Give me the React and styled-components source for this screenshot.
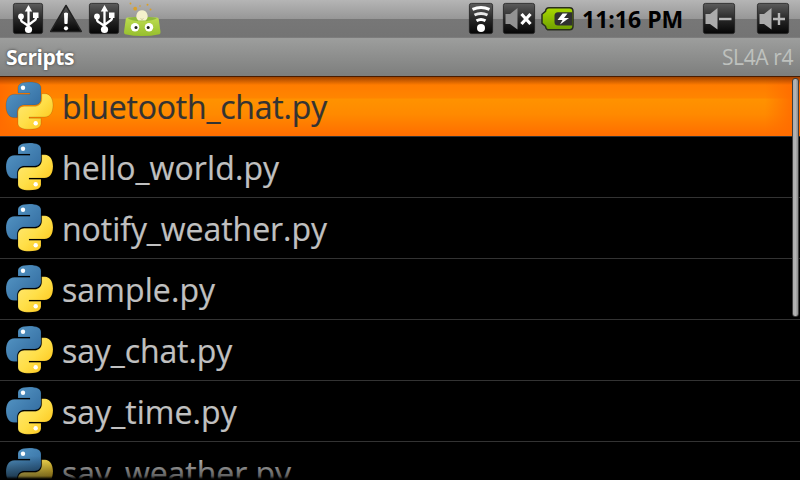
import React from "react";
import styled, { createGlobalStyle } from "styled-components";

const GlobalStyle = createGlobalStyle`
  html, body { margin: 0; background: #000; overflow: hidden; }
  * { box-sizing: border-box; }
`;

const Screen = styled.main`
  position: relative;
  display: flex;
  flex-direction: column;
  width: 800px;
  height: 480px;
  overflow: hidden;
  background: #000;
  font-family: "Open Sans", "Noto Sans", sans-serif;
`;

const StatusBar = styled.header`
  display: flex;
  flex: none;
  justify-content: space-between;
  height: 38px;
  padding: 0 10px 0 12px;
  background: linear-gradient(#b5b5b5 0, #979797 19px, #777 19px, #747474 37px, #858585 38px);
`;

const IconGroup = styled.div`
  display: flex;
  align-items: flex-start;
`;

const Glyph = styled.svg`
  display: block;
  flex: none;
  margin-left: ${(p) => p.$gap || 0}px;
`;

const Clock = styled.time`
  width: 101px;
  margin-left: 8px;
  color: #000;
  font-size: 23px;
  font-weight: 700;
  line-height: 39px;
  white-space: nowrap;
`;

const TitleBar = styled.div`
  display: flex;
  flex: none;
  justify-content: space-between;
  height: 38px;
  padding: 0 7px 0 6px;
  background: linear-gradient(#9d9e9d, #7d7e7d);
  line-height: 38px;
  white-space: nowrap;
`;

const Title = styled.h1`
  margin: 0;
  color: #fff;
  font-size: 21px;
  font-weight: 700;
  line-height: inherit;
  letter-spacing: -0.45px;
  text-shadow: 0 0 3px #333;
`;

const Version = styled.span`
  color: #bec1be;
  font-size: 21px;
  line-height: 39px;
  letter-spacing: -0.4px;
`;

const List = styled.ul`
  flex: 1;
  min-height: 0;
  margin: 0;
  padding: 0;
  overflow: hidden;
  list-style: none;
`;

const Row = styled.li`
  display: flex;
  height: 61px;
  padding: 6px 0 0 6px;
  border-bottom: 1px solid #333;
  color: ${(p) => (p.$selected ? "#333" : "#c0c0c0")};
  background: ${(p) =>
    p.$selected
      ? "linear-gradient(#491c00 0, #491c00 1px, transparent 1px), linear-gradient(rgba(90,30,0,.65), transparent 9px), linear-gradient(90deg, #ff6c00 0, rgba(255,108,0,0) 30px, rgba(255,108,0,0) 765px, #ff6c00 795px), linear-gradient(#ff7600 0, #ff8500 22px, #ff9200 23px, #ff8a00 38px, #ff6d00 60px)"
      : "#000"};
`;

const FileName = styled.span`
  margin-left: 9px;
  font-size: 32px;
  line-height: 49px;
  letter-spacing: ${(p) => p.$tracking}px;
  -webkit-text-stroke: 0.2px currentColor;
  white-space: nowrap;
`;

const ScrollThumb = styled.div`
  position: absolute;
  top: 78px;
  right: 1px;
  width: 7px;
  height: 239px;
  border: 1px solid #3e3e3e;
  border-radius: 3px;
  background: linear-gradient(90deg, #aaa, #b4b4b4 50%, #8b8b8b);
`;

const BottomFade = styled.div`
  position: absolute;
  right: 0;
  bottom: 0;
  left: 0;
  height: 24px;
  background: linear-gradient(transparent, rgba(0, 0, 0, 0.5) 20px, #000 23px);
`;

function Defs() {
  return (
    <defs>
      <linearGradient id="tile" x2="0" y2="1">
        <stop stopColor="#5c5c5c" />
        <stop offset=".5" stopColor="#292929" />
        <stop offset="1" stopColor="#050505" />
      </linearGradient>
      <linearGradient id="blue" x2="1" y2="1">
        <stop stopColor="#599bc9" />
        <stop offset="1" stopColor="#2d659a" />
      </linearGradient>
      <linearGradient id="yellow" x2="1" y2="1">
        <stop stopColor="#ffe97a" />
        <stop offset=".5" stopColor="#ffdf48" />
        <stop offset="1" stopColor="#fcbf10" />
      </linearGradient>
      <linearGradient id="lime" x2="0" y2="1">
        <stop stopColor="#a8d800" />
        <stop offset="1" stopColor="#6fa000" />
      </linearGradient>
      <linearGradient id="bowl" x2="0" y2="1">
        <stop stopColor="#bddc51" />
        <stop offset="1" stopColor="#96bf2d" />
      </linearGradient>
    </defs>
  );
}

const Tile = ({ w }) => (
  <rect x="1.4" y="3.4" width={w - 2.8} height="30.2" rx="2" fill="url(#tile)" stroke="#202020" strokeWidth=".8" />
);

const Usb = ({ gap }) => (
  <Glyph $gap={gap} width="32" height="38">
    <Defs />
    <Tile w={32} />
    <g fill="none" stroke="#fff" strokeWidth="2.3">
      <path d="M16.5 9v20M9 17v2.5q0 2 2.8 3.2l4.7 3.3M24 15v3q0 2-3 3.5L16.5 25" />
    </g>
    <path d="M12.8 11.5 16.5 5l3.7 6.5zM21 12.5h5.5V18H21z" fill="#fff" />
    <circle cx="9" cy="16.5" r="2.9" fill="#fff" />
    <circle cx="16.5" cy="29.5" r="3.6" fill="#fff" />
  </Glyph>
);

const Warning = () => (
  <Glyph $gap={5} width="34" height="38">
    <path d="M17 5.5 32.3 31.4H1.7z" fill="url(#tile)" stroke="#222" strokeWidth="1.5" strokeLinejoin="round" />
    <path d="M15 13.2q2-1.6 4 0l-.4 10.3q-1.6 1.2-3.2 0z" fill="#fff" />
    <circle cx="17" cy="28.3" r="2.1" fill="#fff" />
  </Glyph>
);

const Robot = () => (
  <Glyph $gap={3} width="40" height="38">
    <path d="M4.5 17.500h29.500q1.500 0 1.800 2L37.500 32q.2 1.600-1 2.200-17.300 3.800-34.500 0-1.200-.6-1-2.200L2.700 19.500q.3-2 1.800-2z" fill="url(#bowl)" />
    <path d="M4.500 18Q19 15 34 18 31 21 19 21.200 7 21 4.500 18z" fill="#8fb83c" />
    <path d="M19 10.300a5.800 5.800 0 0 1 3.500 10.300h-7A5.800 5.800 0 0 1 19 10.300z" fill="#f5f1cc" />
    <path d="m17.500 18 1.500 2 1.500-2" fill="none" stroke="#cfc99d" strokeWidth=".8" />
    <circle cx="12" cy="27.200" r="4.200" fill="#fff" />
    <circle cx="26" cy="27.200" r="4.200" fill="#fff" />
    <circle cx="13" cy="27.500" r="1.500" fill="#20261a" />
    <circle cx="25.200" cy="27.500" r="1.500" fill="#20261a" />
    <g fill="#dba027">
      <circle cx="12.200" cy="8.700" r="1.900" />
      <circle cx="24.500" cy="4.800" r="1" />
      <circle cx="27.500" cy="9.500" r="1" />
      <circle cx="7.500" cy="3.500" r=".9" />
      <circle cx="17" cy="6" r=".8" />
    </g>
  </Glyph>
);

const Wifi = () => (
  <Glyph width="26" height="38">
    <Tile w={26} />
    <g fill="none" stroke="#fff" strokeWidth="3">
      <path d="M4.500 9.300q8.500-3.600 17 0" />
      <path d="M6.500 15q6.500-3.200 13 0" stroke="#e9e9e9" />
      <path d="M8.500 20.800q4.500-2.700 9 0" />
    </g>
    <circle cx="13" cy="28" r="4" fill="#fff" />
  </Glyph>
);

const Speaker = ({ kind, gap }) => (
  <Glyph $gap={gap} width="34" height="38">
    <Tile w={34} />
    <path d="M3.500 14H8l7.500-6v21.500L8 24H3.500z" fill={kind === "mute" ? "#929292" : "#ababab"} />
    {kind === "mute" && <path d="m19.500 14 9 10m0-10-9 10" stroke="#fff" strokeWidth="3.200" />}
    {kind === "down" && <path d="M17 19h12.500" stroke="#b8b8b8" strokeWidth="2.400" />}
    {kind === "up" && <path d="M17 19h12M23 13v12" stroke="#b8b8b8" strokeWidth="2.400" />}
  </Glyph>
);

const Battery = () => (
  <Glyph $gap={4} width="34" height="38">
    <path d="M9 7.800h20.500q3.500 0 3.500 3.500v15q0 3.500-3.500 3.500H9q-3 0-3.500-3.500l-3.500-3v-9l3.500-3q.5-3.500 3.500-3.500z" fill="url(#lime)" stroke="#292e1d" strokeWidth="1.500" />
    <path d="M18 12.200H32v13.300H18q-3.500 0-3.500-3.500v-6.300q0-3.500 3.500-3.500z" fill="#303030" />
    <path d="m22.500 13.500-5 6.500h5L20 24.500l9-6.500h-5l3.500-4.500z" fill="#fff" />
  </Glyph>
);

const BODY =
  "M23.500 0C14 0 12 3 12 6v5h12v1.300H8.500C2.500 12.300 0 17.500 0 24c0 6.500 3 11.600 8 11.600h3.300V30c0-4.500 3.500-7 7-7h10.500c3.500 0 6.200-2.800 6.200-6V6C35 2 31 0 23.500 0z";

const Python = () => (
  <Glyph width="47" height="48" viewBox="0 0 47 48" overflow="visible">
    <g stroke="#000" strokeOpacity=".25" strokeWidth=".5">
      <path d={BODY} fill="url(#blue)" />
      <path d="M23.500 47.300C33 47.300 35 44.300 35 41.300v-5H23V35h15.500C44.500 35 47 29.800 47 23.300c0-6.500-3-11.600-8-11.600h-3.300v5.600c0 4.500-3.500 7-7 7H18.200c-3.500 0-6.200 2.800-6.200 6v11c0 4 4 6 11.500 6z" fill="url(#yellow)" />
    </g>
    <circle cx="17" cy="5.800" r="2.200" fill="#fff" />
    <circle cx="29.700" cy="41.200" r="2.200" fill="#fff" />
  </Glyph>
);

const SCRIPTS = [
  { name: "bluetooth_chat.py", tracking: -0.2 },
  { name: "hello_world.py", tracking: 0.1 },
  { name: "notify_weather.py", tracking: -0.05 },
  { name: "sample.py", tracking: 0.1 },
  { name: "say_chat.py", tracking: -0.1 },
  { name: "say_time.py", tracking: 0.05 },
  { name: "say_weather.py", tracking: -0.05 },
];

export default function App() {
  return (
    <>
      <GlobalStyle />
      <Screen>
        <StatusBar>
          <IconGroup>
            <Usb />
            <Warning />
            <Usb gap={5} />
            <Robot />
          </IconGroup>
          <IconGroup>
            <Wifi />
            <Speaker kind="mute" gap={8} />
            <Battery />
            <Clock>11:16 PM</Clock>
            <Speaker kind="down" gap={19} />
            <Speaker kind="up" gap={20} />
          </IconGroup>
        </StatusBar>
        <TitleBar>
          <Title>Scripts</Title>
          <Version>SL4A r4</Version>
        </TitleBar>
        <List>
          {SCRIPTS.map(({ name, tracking }, i) => (
            <Row key={name} $selected={i === 0}>
              <Python />
              <FileName $tracking={tracking}>{name}</FileName>
            </Row>
          ))}
        </List>
        <ScrollThumb />
        <BottomFade />
      </Screen>
    </>
  );
}
